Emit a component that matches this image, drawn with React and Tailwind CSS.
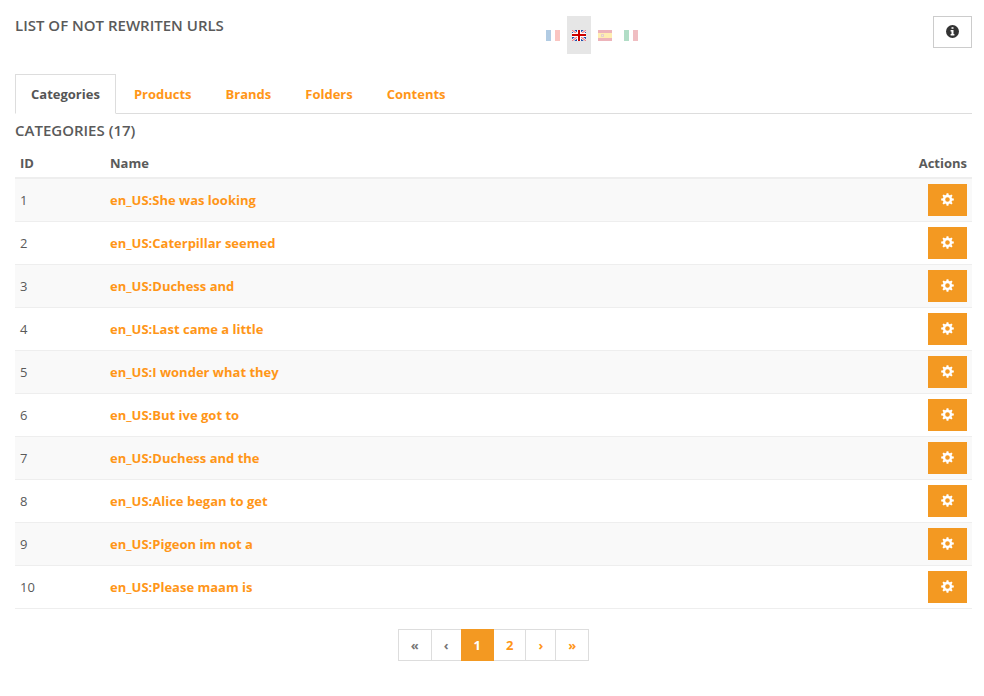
import React, { useState } from "react";

const tabs = ["Categories", "Products", "Brands", "Folders", "Contents"];

const categories = [
  "She was looking",
  "Caterpillar seemed",
  "Duchess and",
  "Last came a little",
  "I wonder what they",
  "But ive got to",
  "Duchess and the",
  "Alice began to get",
  "Pigeon im not a",
  "Please maam is",
];

function FlagFr() {
  return (
    <svg viewBox="0 0 14 11" className="block h-[11px] w-[14px]" shapeRendering="crispEdges">
      <path fill="#0055a4" d="M0 0h5v11H0z" />
      <path fill="#fff" d="M5 0h4v11H5z" />
      <path fill="#ef4135" d="M9 0h5v11H9z" />
    </svg>
  );
}

function FlagGb() {
  return (
    <svg viewBox="0 0 14 11" className="block h-[11px] w-[14px]">
      <path fill="#1c4aa8" d="M0 0h14v11H0z" />
      <path stroke="#fff" strokeWidth="2.6" d="M0 0l14 11M14 0L0 11" />
      <path stroke="#ee7f88" strokeWidth="1.1" d="M0 0l14 11M14 0L0 11" />
      <path fill="#fff" d="M5 0h4v11H5zM0 3h14v4H0z" />
      <path fill="#cc0000" d="M6 0h2v11H6zM0 4h14v2H0z" />
    </svg>
  );
}

function FlagEs() {
  return (
    <svg viewBox="0 0 14 11" className="block h-[11px] w-[14px]" shapeRendering="crispEdges">
      <path fill="#c60b1e" d="M0 0h14v11H0z" />
      <path fill="#ffc400" d="M0 3h14v5H0z" />
      <path fill="#b06a50" d="M3 4h3v3H3z" />
      <path fill="#d9a08a" d="M4 5h1v1H4z" />
    </svg>
  );
}

function FlagIt() {
  return (
    <svg viewBox="0 0 14 11" className="block h-[11px] w-[14px]" shapeRendering="crispEdges">
      <path fill="#009246" d="M0 0h5v11H0z" />
      <path fill="#fff" d="M5 0h4v11H5z" />
      <path fill="#ce2b37" d="M9 0h5v11H9z" />
    </svg>
  );
}

const languages = [
  { code: "fr", label: "Français", Flag: FlagFr },
  { code: "en", label: "English", Flag: FlagGb },
  { code: "es", label: "Español", Flag: FlagEs },
  { code: "it", label: "Italiano", Flag: FlagIt },
];

const cogTeeth = [0, 45, 90, 135];

function CogIcon() {
  return (
    <svg viewBox="0 0 13 13" className="block h-[13px] w-[13px]" fill="none" stroke="currentColor" aria-hidden="true">
      <circle cx="6.5" cy="6.5" r="3.5" strokeWidth="2.4" />
      {cogTeeth.map((angle) => (
        <path
          key={angle}
          fill="currentColor"
          stroke="none"
          transform={"rotate(" + angle + " 6.5 6.5)"}
          d="M5.2 2.5L5.6 0.2h1.8l.4 2.3zM5.2 10.5l.4 2.3h1.8l.4-2.3z"
        />
      ))}
    </svg>
  );
}

function InfoIcon() {
  return (
    <svg viewBox="0 0 13 13" className="block h-[13px] w-[13px]" aria-hidden="true">
      <circle cx="6.5" cy="6.5" r="6.5" fill="#333" />
      <path fill="#fff" d="M5.5 2.2h2v1.6h-2zM4.6 5h2.9v4h.9v1.4H4.6V9h.9V6.4h-.9z" />
    </svg>
  );
}

const pages = [
  { text: "«", label: "First page", kind: "disabled" },
  { text: "‹", label: "Previous page", kind: "disabled" },
  { text: "1", label: "Page 1", kind: "active" },
  { text: "2", label: "Page 2", kind: "link" },
  { text: "›", label: "Next page", kind: "link" },
  { text: "»", label: "Last page", kind: "link" },
];

const pageStyles = {
  disabled: "border-[#ddd] bg-white text-[#777]",
  active: "relative border-[#f39922] bg-[#f39922] text-white",
  link: "border-[#ddd] bg-white text-[#ff9618]",
};

export default function App() {
  const [tab, setTab] = useState("Categories");

  return (
    <main className="bg-white pt-4 pr-3 pb-5 pl-[15px] font-['Open_Sans',sans-serif] text-[13px] leading-5 text-[#5a5a5a]">
      <header className="flex items-start">
        <h1 className="w-[55%] text-[15px] leading-[18px] font-semibold">LIST OF NOT REWRITEN URLS</h1>
        <nav aria-label="Language" className="flex gap-0.5">
          {languages.map(({ code, label, Flag }) => (
            <a
              key={code}
              href={"#" + code}
              aria-label={label}
              className={
                code === "en"
                  ? "flex h-[38px] w-6 items-center justify-center bg-[#e6e6e6]"
                  : "flex h-[38px] w-6 items-center justify-center opacity-30"
              }
            >
              <Flag />
            </a>
          ))}
        </nav>
        <button
          type="button"
          aria-label="Information"
          className="ml-auto flex h-8 w-[39px] items-center justify-center border border-[#ccc] bg-white pb-px"
        >
          <InfoIcon />
        </button>
      </header>

      <div role="tablist" className="mt-5 flex gap-0.5 border-b border-[#ddd]">
        {tabs.map((name) => (
          <button
            key={name}
            type="button"
            role="tab"
            aria-selected={name === tab}
            onClick={() => setTab(name)}
            className={
              name === tab
                ? "-mb-px border border-[#ddd] border-b-white bg-white px-[15px] py-[9px] font-bold text-[#555]"
                : "-mb-px border border-transparent px-[15px] py-[9px] font-bold text-[#ff9618]"
            }
          >
            {name}
          </button>
        ))}
      </div>

      <table className="w-full table-fixed border-collapse">
        <caption className="pt-[7px] pb-[10px] text-left text-[15px] leading-[18px] font-semibold">
          CATEGORIES (17)
        </caption>
        <thead>
          <tr className="border-b-2 border-[#eee] text-left">
            <th className="w-[90px] px-[5px] py-1 font-bold">ID</th>
            <th className="px-[5px] py-1 font-bold">Name</th>
            <th className="w-[90px] px-[5px] py-1 text-right font-bold">Actions</th>
          </tr>
        </thead>
        <tbody>
          {categories.map((name, i) => (
            <tr key={i} className="border-b border-[#eee] odd:bg-[#f9f9f9]">
              <td className="p-[5px]">{i + 1}</td>
              <td className="p-[5px]">
                <a href={"#category-" + (i + 1)} className="font-bold text-[#ff9618]">
                  en_US:{name}
                </a>
              </td>
              <td className="p-[5px]">
                <button
                  type="button"
                  aria-label={"Configure category " + (i + 1)}
                  className="ml-auto flex h-8 w-[39px] items-center justify-center bg-[#f39922] pb-px text-white"
                >
                  <CogIcon />
                </button>
              </td>
            </tr>
          ))}
        </tbody>
      </table>

      <nav aria-label="Pagination" className="mt-5 flex justify-center">
        {pages.map(({ text, label, kind }) => (
          <a
            key={label}
            href="#page"
            aria-label={label}
            className={"-ml-px border px-3 py-[5px] font-bold first:ml-0 " + pageStyles[kind]}
          >
            {text}
          </a>
        ))}
      </nav>
    </main>
  );
}
